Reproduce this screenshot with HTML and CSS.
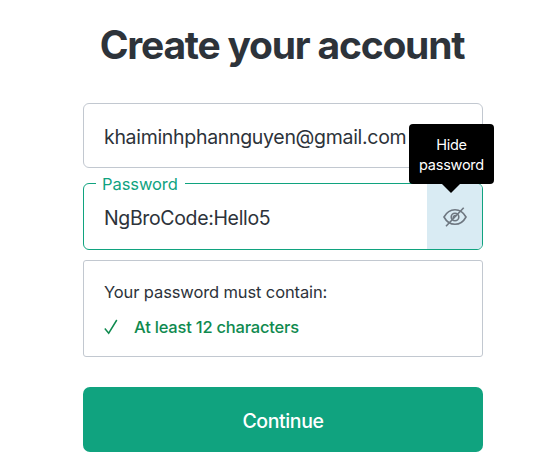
FILE: index.html
```html
<!DOCTYPE html>
<html lang="en">
<head>
<meta charset="utf-8">
<title>Create your account</title>
<link rel="stylesheet" href="styles.css">
</head>
<body>
<main class="signup">
  <h1 class="title"><span>Create your account</span></h1>
  <div class="field email"><span class="email-text">khaiminhphannguyen@gmail.com</span></div>
  <div class="field password">
    <label class="label"><span>Password</span></label>
    <span class="password-text">NgBroCode:Hello5</span>
    <button class="toggle" aria-label="Hide password">
      <svg width="24" height="20" viewBox="0 0 24 20" fill="none" stroke="currentColor" stroke-width="1.600">
        <path d="M1 10C3.500 5.400 7.200 2.700 12 2.700S20.500 5.400 23 10C20.500 14.600 16.800 17.300 12 17.300S3.500 14.600 1 10Z"/>
        <circle cx="12" cy="10" r="3.800"/>
        <path d="M10.300 11.500C9.800 9.500 11.500 8.200 13.300 8.800"/>
        <path d="M3 19.300L20.700 .7"/>
      </svg>
    </button>
    <div class="tooltip"><span>Hide</span><span>password</span></div>
  </div>
  <section class="rules">
    <p class="rules-title"><span>Your password must contain:</span></p>
    <div class="rule">
      <svg width="14" height="16" viewBox="0 0 14 16" fill="none" stroke="currentColor" stroke-width="1.500"><path d="M.8 9.500L4.700 14.200L12.800 1"/></svg>
      <span class="rule-text">At least 12 characters</span>
    </div>
  </section>
  <button class="continue"><span>Continue</span></button>
</main>
</body>
</html>
```
FILE: styles.css
```css
* { box-sizing: border-box; }
body {
  margin: 0;
  background: #fff;
  color: #2d333a;
  font-family: Inter, "Liberation Sans", sans-serif;
  overflow: hidden;
}
button { border: 0; padding: 0; font: inherit; }
.signup {
  width: 400px;
  margin-left: 83px;
  padding-top: 21px;
}
.title {
  margin: 0 0 34px;
  height: 48px;
  padding-right: 2px;
  line-height: 48px;
  text-align: center;
  font-size: 39px;
  font-weight: 700;
  letter-spacing: -1.22px;
  white-space: nowrap;
}
.field {
  display: flex;
  align-items: center;
  border: 1px solid #c2c8d0;
  border-radius: 6px;
  padding-left: 20px;
  font-size: 19.5px;
  white-space: nowrap;
}
.email { height: 65px; padding-top: 3px; letter-spacing: -.31px; }
.password {
  position: relative;
  height: 67px;
  margin-top: 15px;
  border-color: #10a37f;
}
.password-text { padding-top: 2px; letter-spacing: -.35px; }
.label {
  position: absolute;
  left: 12px;
  top: -12px;
  padding: 0 7px 0 6px;
  background: #fff;
  color: #10a37f;
  font-size: 16.5px;
  line-height: 24px;
  letter-spacing: -.08px;
}
.toggle {
  display: flex;
  align-items: center;
  justify-content: center;
  width: 55px;
  height: 65px;
  margin-left: auto;
  border-radius: 0 5px 5px 0;
  background: #d9ebf3;
  color: #6e7780;
}
.tooltip {
  position: absolute;
  left: 325px;
  top: -60px;
  width: 85px;
  height: 60px;
  padding-top: 11px;
  display: flex;
  flex-direction: column;
  align-items: center;
  border-radius: 4px;
  background: #000;
  color: #fff;
  font-size: 14.5px;
  line-height: 20px;
  letter-spacing: -.25px;
}
.tooltip::after {
  content: "";
  position: absolute;
  left: 32px;
  top: 59px;
  border: 10px solid transparent;
  border-bottom: 0;
  border-top-color: #000;
}
.rules {
  height: 97px;
  margin-top: 10px;
  padding: 19px 20px;
  border: 1px solid #c2c8d0;
  border-radius: 3px;
  font-size: 16.5px;
  line-height: 24px;
  letter-spacing: -.12px;
  white-space: nowrap;
}
.rules-title { margin: 0 0 11px; }
.rule {
  display: flex;
  align-items: center;
  gap: 16px;
  color: #0f8a4f;
  font-weight: 500;
  letter-spacing: -.21px;
}
.continue {
  display: flex;
  align-items: center;
  justify-content: center;
  width: 400px;
  height: 65px;
  margin-top: 30px;
  padding-top: 3px;
  border-radius: 7px;
  background: #10a37f;
  color: #fff;
  font-size: 19.5px;
  font-weight: 500;
  letter-spacing: -.4px;
}
```
